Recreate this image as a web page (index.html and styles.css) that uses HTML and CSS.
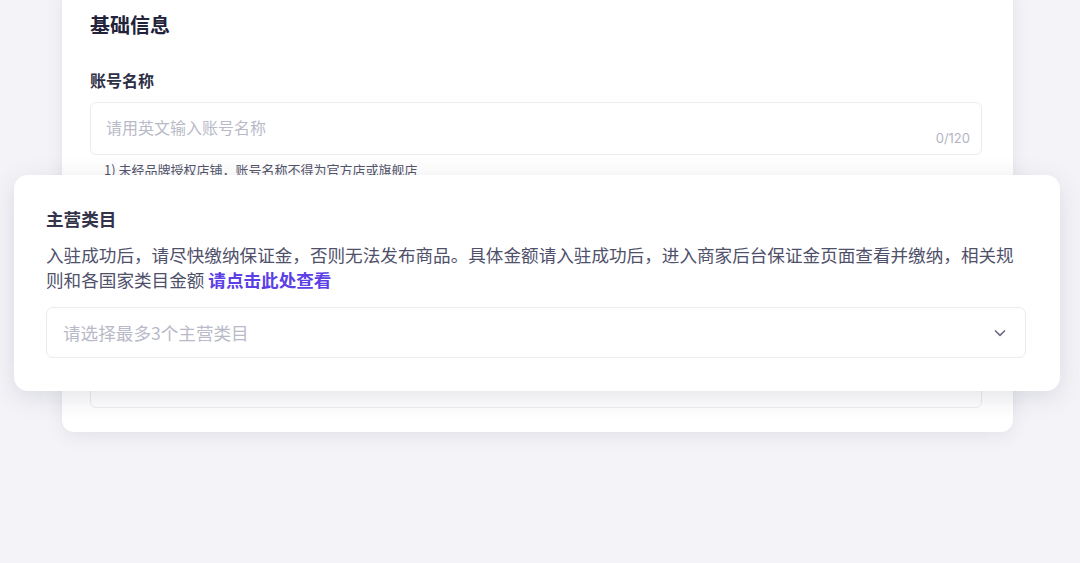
FILE: index.html
```html
<!DOCTYPE html>
<html lang="zh-CN">
<head>
<meta charset="utf-8">
<title>基础信息</title>
<link rel="stylesheet" href="styles.css">
</head>
<body>
<div class="card back">
  <h2 class="title">基础信息</h2>
  <div class="label">账号名称</div>
  <div class="input">
    <span class="ph">请用英文输入账号名称</span>
    <span class="count">0/120</span>
  </div>
  <ul class="hints">
    <li>1) 未经品牌授权店铺，账号名称不得为官方店或旗舰店</li>
  </ul>
  <div class="select"></div>
</div>

<div class="card front">
  <div class="f-label">主营类目</div>
  <p class="f-desc">入驻成功后，请尽快缴纳保证金，否则无法发布商品。具体金额请入驻成功后，进入商家后台保证金页面查看并缴纳，相关规则和各国家类目金额 <a class="link">请点击此处查看</a></p>
  <div class="f-select">
    <span class="ph">请选择最多3个主营类目</span>
    <svg class="chev" width="14" height="14" viewBox="0 0 14 14"><polyline points="2.5,5 7,9.3 11.5,5" fill="none" stroke="#6d6e82" stroke-width="1.7" stroke-linecap="round" stroke-linejoin="round"/></svg>
  </div>
</div>
</body>
</html>
```

FILE: styles.css
```css
* { box-sizing: border-box; }
html, body { margin: 0; padding: 0; }
body {
  position: relative;
  background: #f4f4f8;
  font-family: "Noto Sans CJK SC", "Noto Sans", sans-serif;
  color: #2a2b3f;
  height: 563px;
  overflow: hidden;
}
.card {
  background: #fff;
}
.back {
  width: 951px;
  margin: -20px 0 0 62px;
  padding: 28px 31px 24px 28px;
  border-radius: 12px;
  box-shadow: 0 4px 18px rgba(40, 40, 80, 0.09);
}
.title {
  margin: 0;
  font-size: 20px;
  line-height: 34px;
  font-weight: 700;
  color: #22233a;
}
.label {
  margin-top: 26px;
  font-size: 16px;
  line-height: 24px;
  font-weight: 600;
  color: #2e2f44;
}
.input {
  margin-top: 10px;
  height: 53px;
  border: 1px solid #ebebf1;
  border-radius: 6px;
  padding: 0 11px 4px 15px;
  position: relative;
  display: flex;
  align-items: center;
}
.ph {
  color: #b9bac8;
  font-size: 16px;
}
.count {
  position: absolute;
  right: 11px;
  bottom: 8px;
  font-size: 13px;
  color: #b3b4c3;
  font-family: "Inter", "Noto Sans", sans-serif;
}
.hints {
  list-style: none;
  margin: 5px 0 0;
  padding: 0 0 0 14px;
  font-size: 13px;
  line-height: 20px;
  color: #54556b;
}
.select {
  margin-top: 182px;
  height: 46px;
  border: 1px solid #ebebf1;
  border-radius: 6px;
}
.link {
  color: #5b40e6;
  font-weight: 700;
  text-decoration: none;
}
.front {
  position: absolute;
  left: 14px;
  top: 175px;
  width: 1046px;
  padding: 31px 34px 33px 32px;
  border-radius: 14px;
  box-shadow: 0 6px 26px rgba(40, 40, 80, 0.13);
}
.f-label {
  font-size: 17.6px;
  line-height: 25px;
  font-weight: 600;
  color: #33344a;
}
.f-desc {
  margin: 11px 0 0;
  font-size: 17.6px;
  line-height: 25px;
  color: #4f506a;
}
.f-select {
  margin-top: 15px;
  height: 51px;
  border: 1px solid #ebebf1;
  border-radius: 7px;
  padding: 0 18px 0 16px;
  display: flex;
  align-items: center;
  justify-content: space-between;
}
.f-select .ph { font-size: 17.6px; }
.chev { display: block; }
```
